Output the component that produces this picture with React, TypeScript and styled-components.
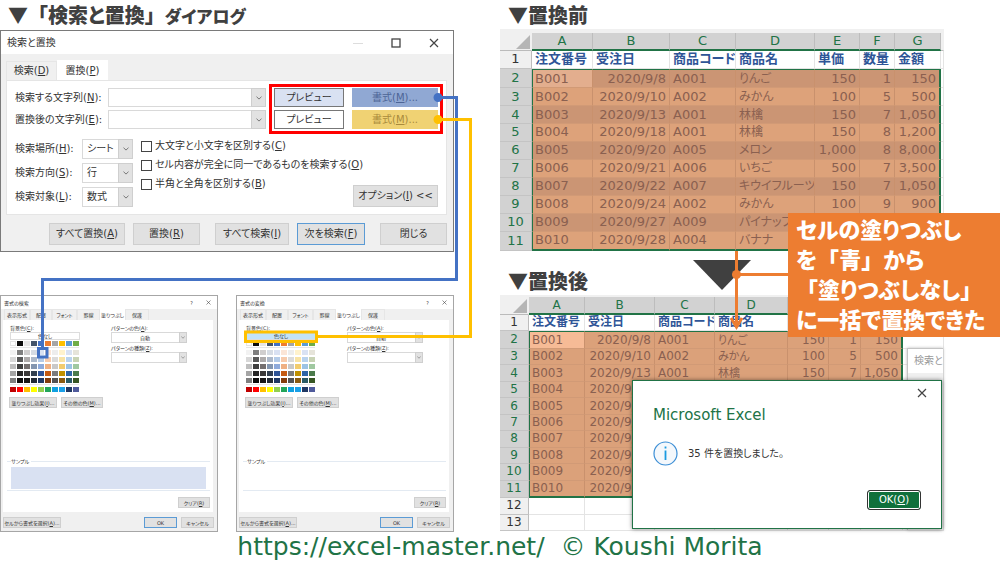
import React from "react";
import styled, { createGlobalStyle, css } from "styled-components";

const GlobalStyle = createGlobalStyle`
  *, *::before, *::after { box-sizing: border-box; }
  body {
    margin: 0;
    background: #fff;
    color: #333;
    font-family: "DejaVu Sans", "Noto Sans CJK JP", sans-serif;
    font-feature-settings: "palt";
  }
  button, input, select { font: inherit; color: inherit; font-feature-settings: inherit; margin: 0; }
`;

/* ---------- page ---------- */

const Page = styled.div`
  display: flex;
  flex-direction: column;
  overflow: hidden;
`;

const Columns = styled.main`
  display: grid;
  grid-template-columns: 1fr 1fr;
`;

const Column = styled.section`
  position: relative;
  min-width: 0;
`;

const Heading = styled.h2`
  margin: 0;
  padding-left: 8px;
  height: 29px;
  line-height: 29px;
  font-family: "Noto Sans CJK JP", sans-serif;
  font-size: 20px;
  font-weight: 900;
  color: #404040;
  white-space: nowrap;
`;

/* Corner brackets keep their full-width advance. */
const Bracket = styled.span`
  font-feature-settings: normal;
`;

const Katakana = styled.span`
  font-size: 17px;
`;

const Footer = styled.footer`
  text-align: center;
  font-size: 25px;
  line-height: 30px;
  color: #217346;
  white-space: pre;

  a { color: inherit; text-decoration: none; }
`;

/* ---------- shared dialog parts ---------- */

const Window = styled.div<{ $small?: boolean }>`
  display: flex;
  flex-direction: column;
  border: 1px solid ${(p) => (p.$small ? "#a6a6a6" : "#7a7a7a")};
  background: #f0f0f0;
  font-size: ${(p) => (p.$small ? 5 : 10)}px;
  line-height: ${(p) => (p.$small ? 8 : 14)}px;
  white-space: nowrap;
`;

const TitleBar = styled.div<{ $small?: boolean }>`
  display: flex;
  align-items: center;
  gap: ${(p) => (p.$small ? 13 : 28)}px;
  height: ${(p) => (p.$small ? 13 : 23)}px;
  padding: ${(p) => (p.$small ? "0 6px 0 3px" : "0 14px 0 6px")};
  background: #fff;

  span:first-child { margin-right: auto; }
`;

const Button = styled.button<{ $focus?: boolean; $wide: number; $tall: number; $fill?: string; $line?: string }>`
  width: ${(p) => p.$wide}px;
  height: ${(p) => p.$tall}px;
  flex: none;
  padding: 0;
  border: 1px solid ${(p) => (p.$focus ? "#5b9bd5" : p.$line || "#cfcfcf")};
  background: ${(p) => p.$fill || "#e1e1e1"};
  text-align: center;
  white-space: nowrap;
`;

const ComboFrame = styled.div<{ $wide: number; $tall: number }>`
  position: relative;
  width: ${(p) => p.$wide}px;
  height: ${(p) => p.$tall}px;

  input, select {
    appearance: none;
    display: block;
    width: 100%;
    height: 100%;
    padding: 0 4px;
    border: 1px solid #d9d9d9;
    border-radius: 0;
    background: #fff;
    outline: none;
  }
`;

const ComboArrow = styled.span<{ $small?: boolean }>`
  position: absolute;
  top: 0;
  right: 0;
  bottom: 0;
  width: ${(p) => (p.$small ? 8 : 15)}px;
  display: flex;
  align-items: center;
  justify-content: center;
  border: 1px solid #cfcfcf;
  background: #e2e2e2;
  pointer-events: none;
`;

function Chevron({ small }: { small?: boolean }) {
  return (
    <ComboArrow $small={small}>
      <svg width={small ? 4 : 6} height={small ? 3 : 4} viewBox="0 0 6 4">
        <path d="M.5 .7 3 3.1 5.5 .7" fill="none" stroke="#777" strokeWidth="1" />
      </svg>
    </ComboArrow>
  );
}

function Close({ size }: { size: number }) {
  return (
    <svg width={size} height={size} viewBox="0 0 10 10">
      <path d="M1 1 9 9M9 1 1 9" stroke="#444" strokeWidth="1.2" />
    </svg>
  );
}

/* Text with its access key, "(X)", underlined. */
function Keyed({ text }: { text: string }) {
  const m = text.match(/^(.*\()(\w)(\).*)$/);
  if (!m) return <>{text}</>;
  return (
    <span>
      {m[1]}
      <u>{m[2]}</u>
      {m[3]}
    </span>
  );
}

/* ---------- find and replace dialog ---------- */

const FindWindow = styled(Window)`
  max-width: 454px;
  margin-top: 1px;
`;

const FindBody = styled.div`
  padding: 6px 6px 6px 5px;
`;

const Tabs = styled.div`
  display: flex;
  align-items: flex-end;
`;

const Tab = styled.button<{ $active?: boolean; $wide: number; $tall: number }>`
  width: ${(p) => p.$wide}px;
  height: ${(p) => p.$tall}px;
  padding: 0;
  border: 1px solid ${(p) => (p.$active ? "#fff" : "#e6e6e6")};
  border-bottom: 0;
  background: ${(p) => (p.$active ? "#fff" : "#f0f0f0")};
`;

const FindPanel = styled.div`
  position: relative;
  height: 135px;
  padding: 7px 8px;
  border: 1px solid #e5e5e5;
  background: #fff;
`;

const TermRow = styled.div`
  display: grid;
  grid-template-columns: 93px 158px 78px 94px;
  align-items: center;
  margin-bottom: 3px;

  button { justify-self: end; }
`;

const FormatButton = styled(Button)<{ $ink: string }>`
  color: ${(p) => p.$ink};
`;

const RedFrame = styled.div`
  position: absolute;
  left: 262px;
  top: 3px;
  width: 174px;
  height: 50px;
  border: 3px solid #f00;
  pointer-events: none;
`;

const OptionArea = styled.div`
  display: flex;
  margin-top: 10px;
`;

const Scope = styled.div`
  display: grid;
  grid-template-columns: 67px 51px;
  row-gap: 4px;
  align-items: center;
`;

const Checks = styled.div`
  display: flex;
  flex-direction: column;
  gap: 5px;
  margin-left: 8px;
`;

const Check = styled.label`
  display: flex;
  align-items: center;
  gap: 3px;
  height: 14px;

  input {
    appearance: none;
    width: 11px;
    height: 11px;
    border: 1px solid #444;
    background: #fff;
  }
`;

const OptionSlot = styled.div`
  flex: 1;
  display: flex;
  justify-content: flex-end;
  align-items: flex-end;
  width: 0;
`;

const FindActions = styled.div`
  display: flex;
  justify-content: flex-end;
  gap: 8px;
  padding-top: 8px;

  button:nth-child(3), button:nth-child(5) { margin-left: 7px; }
`;

interface TermProps {
  id: string;
  label: string;
  fill: string;
  formatFill: string;
  formatColor: string;
}

function TermLine({ id, label, fill, formatFill, formatColor }: TermProps) {
  return (
    <TermRow>
      <label htmlFor={id}><Keyed text={label} /></label>
      <ComboFrame $wide={158} $tall={19}>
        <input id={id} type="text" />
        <Chevron />
      </ComboFrame>
      <Button $wide={70} $tall={19} $fill={fill} $line="#777">プレビュー</Button>
      <FormatButton $wide={86} $tall={19} $fill={formatFill} $line={formatFill} $ink={formatColor}>
        <Keyed text="書式(M)..." />
      </FormatButton>
    </TermRow>
  );
}

function FindReplaceDialog() {
  const scopes = [
    ["検索場所(H):", "シート"],
    ["検索方向(S):", "行"],
    ["検索対象(L):", "数式"],
  ];
  const checks = ["大文字と小文字を区別する(C)", "セル内容が完全に同一であるものを検索する(O)", "半角と全角を区別する(B)"];
  return (
    <FindWindow>
      <TitleBar>
        <span>検索と置換</span>
        <svg width="10" height="10"><path d="M0 5.5H10" stroke="#ddd" /></svg>
        <svg width="10" height="10"><rect x="1" y="1" width="8" height="8" fill="none" stroke="#444" strokeWidth="1.3" /></svg>
        <Close size={10} />
      </TitleBar>
      <FindBody>
        <Tabs>
          <Tab $wide={51} $tall={19}><Keyed text="検索(D)" /></Tab>
          <Tab $wide={51} $tall={20} $active><Keyed text="置換(P)" /></Tab>
        </Tabs>
        <FindPanel>
          <TermLine id="find" label="検索する文字列(N):" fill="#d9e1f2" formatFill="#90a8d3" formatColor="#4d6596" />
          <TermLine id="replace" label="置換後の文字列(E):" fill="#fff" formatFill="#f0d273" formatColor="#a98a3c" />
          <RedFrame />
          <OptionArea>
            <Scope>
              {scopes.map(([label, value], i) => (
                <React.Fragment key={label}>
                  <label htmlFor={`scope-${i}`}><Keyed text={label} /></label>
                  <ComboFrame $wide={51} $tall={20}>
                    <select id={`scope-${i}`}><option>{value}</option></select>
                    <Chevron />
                  </ComboFrame>
                </React.Fragment>
              ))}
            </Scope>
            <Checks>
              {checks.map((c) => (
                <Check key={c}><input type="checkbox" /><Keyed text={c} /></Check>
              ))}
            </Checks>
            <OptionSlot>
              <Button $wide={85} $tall={22}><Keyed text="オプション(I) <<" /></Button>
            </OptionSlot>
          </OptionArea>
        </FindPanel>
        <FindActions>
          <Button $wide={76} $tall={22}><Keyed text="すべて置換(A)" /></Button>
          <Button $wide={67} $tall={22}><Keyed text="置換(R)" /></Button>
          <Button $wide={74} $tall={22}><Keyed text="すべて検索(I)" /></Button>
          <Button $wide={68} $tall={22} $focus><Keyed text="次を検索(F)" /></Button>
          <Button $wide={67} $tall={22}>閉じる</Button>
        </FindActions>
      </FindBody>
    </FindWindow>
  );
}

/* ---------- format dialogs ---------- */

const FormatRow = styled.div`
  display: flex;
  gap: 18px;
  max-width: 454px;
  margin-top: 43px;
`;

const FormatWindow = styled(Window)`
  flex: 1;
  height: 237px;
  min-width: 0;
`;

const FormatTabs = styled(Tabs)`
  padding-left: 3px;
`;

const FormatPanel = styled.div`
  display: flex;
  flex-direction: column;
  flex: 1;
  margin: 0 4px 0 2px;
  padding: 4px 3px 4px 4px;
  background: #fff;
`;

const FillArea = styled.div`
  display: grid;
  grid-template-columns: 101px 1fr;
  padding-left: 3px;
`;

const FillColumn = styled.div`
  display: flex;
  flex-direction: column;
  align-items: flex-start;
`;

const PatternCombo = styled(ComboFrame)`
  margin-bottom: 1px;

  select { text-align: center; padding-right: 12px; }
`;

const PaletteBlock = styled.div<{ $ruled?: boolean }>`
  display: grid;
  grid-template-columns: repeat(10, 6px);
  column-gap: 1px;
  row-gap: 2px;
  padding-top: 1px;

  & + & { padding-top: 2px; border-top: 1px solid ${(p) => (p.$ruled ? "#e6e6e6" : "transparent")}; }
  & + & { margin-top: ${(p) => (p.$ruled ? 1 : 0)}px; }
`;

const Swatch = styled.span<{ $color: string }>`
  height: 5px;
  background: ${(p) => p.$color};
  ${(p) => p.$color === "#ffffff" && css`border: 1px solid #e4e4e4;`}
`;

const MoreColors = styled.div`
  display: flex;
  gap: 4px;
  padding: 5px 0 0 2px;
`;

const Sample = styled.fieldset`
  min-width: 0;
  height: 34px;
  margin: auto 0 6px;
  padding: 2px 4px;
  border: 0;
  border-top: 1px solid #e3eaf2;
  border-bottom: 1px solid #e3eaf2;

  legend { padding: 0 2px 0 0; }
`;

const SampleFill = styled.div<{ $color: string }>`
  height: 22px;
  background: ${(p) => p.$color};
`;

const ClearSlot = styled.div`
  display: flex;
  justify-content: flex-end;
`;

const FormatActions = styled.div`
  display: flex;
  gap: 4px;
  padding: 5px 3px 3px 2px;

  button:first-child { margin-right: auto; }
`;

const themeColors = [
  ["#ffffff", "#0d0d0d", "#e7e6e6", "#44546a", "#4472c4", "#ed7d31", "#a5a5a5", "#ffc000", "#5b9bd5", "#70ad47"],
];
const shades = [
  ["#f2f2f2", "#7f7f7f", "#d0cece", "#d6dce4", "#d9e1f2", "#fbe5d6", "#ededed", "#fff2cc", "#d9e2f3", "#e6e4da"],
  ["#d8d8d8", "#595959", "#aeabab", "#adb9ca", "#b4cbe8", "#f7cbac", "#dbdbdb", "#f8e3a4", "#b9d3ee", "#c8d3b4"],
  ["#bfbfbf", "#3f3f3f", "#757070", "#8496b0", "#8eaadb", "#efb083", "#c9c9c9", "#f2cc6e", "#9cc3e5", "#a0c8a0"],
  ["#a5a5a5", "#262626", "#3a3838", "#323f4f", "#2f5496", "#c55a11", "#7b7b7b", "#bf9000", "#2e65a5", "#4b7b4b"],
  ["#7f7f7f", "#0c0c0c", "#171616", "#222a35", "#1f3864", "#833c0b", "#525252", "#8a5a10", "#2a5a64", "#375623"],
];
const vivid = [["#c00000", "#ff0000", "#ffc000", "#ffff00", "#92d050", "#22a55a", "#10a0e0", "#1aa0e8", "#203864", "#4f5a9b"]];

function Palette({ rows, ruled }: { rows: string[][]; ruled?: boolean }) {
  return (
    <PaletteBlock $ruled={ruled}>
      {rows.flat().map((c, i) => <Swatch key={i} $color={c} />)}
    </PaletteBlock>
  );
}

const NoFillLabel = styled.span`
  display: block;
  line-height: 6px;
`;

const formatTabs: [string, number][] = [["表示形式", 26], ["配置", 22], ["フォント", 25], ["罫線", 23], ["塗りつぶし", 25], ["保護", 24]];

function FormatDialog({ id, title, noFill, sample }: { id: string; title: string; noFill: string; sample: string }) {
  return (
    <FormatWindow $small>
      <TitleBar $small>
        <span>{title}</span>
        <span>?</span>
        <Close size={5} />
      </TitleBar>
      <FormatTabs>
        {formatTabs.map(([name, w]) => (
          <Tab key={name} $wide={w} $tall={11} $active={name === "塗りつぶし"}>{name}</Tab>
        ))}
      </FormatTabs>
      <FormatPanel>
        <FillArea>
          <FillColumn>
            <Keyed text="背景色(C):" />
            <Button $wide={70} $tall={8} $fill={noFill} $line="#ddd"><NoFillLabel>色なし</NoFillLabel></Button>
            <Palette rows={themeColors} />
            <Palette rows={shades} ruled />
            <Palette rows={vivid} />
          </FillColumn>
          <FillColumn>
            <label htmlFor={`${id}-color`}><Keyed text="パターンの色(A):" /></label>
            <PatternCombo $wide={76} $tall={11}>
              <select id={`${id}-color`}><option>自動</option></select>
              <Chevron small />
            </PatternCombo>
            <label htmlFor={`${id}-kind`}><Keyed text="パターンの種類(Z):" /></label>
            <PatternCombo $wide={76} $tall={11}>
              <select id={`${id}-kind`}><option></option></select>
              <Chevron small />
            </PatternCombo>
          </FillColumn>
        </FillArea>
        <MoreColors>
          <Button $wide={48} $tall={11}><Keyed text="塗りつぶし効果(I)..." /></Button>
          <Button $wide={42} $tall={11}><Keyed text="その他の色(M)..." /></Button>
        </MoreColors>
        <Sample>
          <legend>サンプル</legend>
          <SampleFill $color={sample} />
        </Sample>
        <ClearSlot>
          <Button $wide={32} $tall={11}><Keyed text="クリア(R)" /></Button>
        </ClearSlot>
      </FormatPanel>
      <FormatActions>
        <Button $wide={58} $tall={11}><Keyed text="セルから書式を選択(A)..." /></Button>
        <Button $wide={33} $tall={11} $focus>OK</Button>
        <Button $wide={33} $tall={11}>キャンセル</Button>
      </FormatActions>
    </FormatWindow>
  );
}

const Overlay = styled.svg`
  position: absolute;
  left: 0;
  top: 0;
  overflow: visible;
  pointer-events: none;
`;

function Connectors() {
  return (
    <Overlay width="480" height="370" viewBox="0 0 480 370" fill="none" strokeWidth="3">
      <path d="M438 97.5H456.5V279.5H42.5V347" stroke="#4472c4" />
      <rect x="38.5" y="348.5" width="8.5" height="8.5" stroke="#4472c4" />
      <circle cx="438" cy="97.5" r="3" fill="#4472c4" stroke="#4472c4" />
      <path d="M438 119.5H470.5V336.5H318" stroke="#ffc000" />
      <rect x="245.5" y="332" width="71" height="9.5" stroke="#ffc000" />
      <circle cx="438" cy="119.5" r="3" fill="#ffc000" stroke="#ffc000" />
    </Overlay>
  );
}

/* ---------- worksheets ---------- */

const Sheet = styled.table<{ $size: number; $tall: number; $line: number; $strip: number }>`
  width: 444px;
  height: ${(p) => p.$tall}px;
  border-collapse: separate;
  border-spacing: 0;
  table-layout: fixed;
  background: #fff;
  border-top: ${(p) => p.$strip}px solid #f0f0f0;
  font-size: ${(p) => p.$size}px;
  line-height: ${(p) => p.$line}px;
  white-space: nowrap;

  th, td { padding: 0 3px; overflow: hidden; border-right: 1px solid #e4e4e4; border-bottom: 1px solid #e4e4e4; }
`;

const Letter = styled.th<{ $idle?: boolean }>`
  height: 18px;
  && {
    padding: 0;
    border-right-color: ${(p) => (p.$idle ? "#f0f0f0" : "#bdbdbd")};
    border-bottom: ${(p) => (p.$idle ? "1px solid #bbb" : "2px solid #217346")};
  }
  background: ${(p) => (p.$idle ? "#f0f0f0" : "#d2d2d2")};
  color: #217346;
  font-weight: 400;
`;

const RowNumber = styled.th<{ $idle?: boolean }>`
  && {
    padding: 0;
    border-right-color: #bdbdbd;
    border-bottom-color: #c4c4c4;
  }
  background: ${(p) => (p.$idle ? "#f0f0f0" : "#d2d2d2")};
  color: ${(p) => (p.$idle ? "#333" : "#217346")};
  font-weight: 400;
`;

const FieldName = styled.td`
  && { padding-right: 0; }
  color: #2f5597;
  font-weight: 700;
`;

const Cell = styled.td<{ $fill: string; $right?: boolean; $edge: string; $size: number }>`
  background: ${(p) => p.$fill};
  color: #8a6050;
  font-size: ${(p) => p.$size}px;
  text-align: ${(p) => (p.$right ? "right" : "left")};
  && {
    ${(p) => !p.$right && "padding-right: 0;"}
    border-right-color: #c9916d;
    border-bottom-color: #d19a76;
    ${(p) => p.$edge.includes("t") && "border-top: 1px solid #217346;"}
    ${(p) => p.$edge.includes("l") && "border-left: 1px solid #217346; padding-left: 2px;"}
    ${(p) => p.$edge.includes("r") && "border-right: 2px solid #217346;"}
    ${(p) => p.$edge.includes("b") && "border-bottom: 2px solid #217346;"}
  }
`;

const Corner = styled.svg`
  display: block;
  width: 14px;
  height: 14px;
  margin: 1px 1px 0 auto;
`;

const fields = ["注文番号", "受注日", "商品コード", "商品名", "単価", "数量", "金額"];
const orders = [
  ["B001", "2020/9/8", "A001", "りんご", "150", "1", "150"],
  ["B002", "2020/9/10", "A002", "みかん", "100", "5", "500"],
  ["B003", "2020/9/13", "A001", "林檎", "150", "7", "1,050"],
  ["B004", "2020/9/18", "A001", "林檎", "150", "8", "1,200"],
  ["B005", "2020/9/20", "A005", "メロン", "1,000", "8", "8,000"],
  ["B006", "2020/9/21", "A006", "いちご", "500", "7", "3,500"],
  ["B007", "2020/9/22", "A007", "キウイフルーツ", "150", "7", "1,050"],
  ["B008", "2020/9/24", "A002", "みかん", "100", "9", "900"],
  ["B009", "2020/9/27", "A009", "パイナップル", "", "", ""],
  ["B010", "2020/9/28", "A004", "バナナ", "", "", ""],
];

interface SheetProps {
  size: number;
  tall: number;
  line: number;
  strip: number;
  widths: number[];
  fills: [string, string];
  active: string;
  blanks: number[];
  covered?: number;
}

/* Rows from `covered` on lie under the message box from their third column. */
function Worksheet({ size, tall, line, strip, widths, fills, active, blanks, covered = 99 }: SheetProps) {
  return (
    <Sheet $size={size} $tall={tall} $line={line} $strip={strip}>
      <colgroup>{widths.map((w, i) => <col key={i} width={w} />)}<col /></colgroup>
      <thead>
        <tr>
          <Letter $idle>
            <Corner viewBox="0 0 14 14"><path d="M14 0V14H0Z" fill="#b5b5b5" /></Corner>
          </Letter>
          {"ABCDEFG".split("").map((l) => <Letter key={l}>{l}</Letter>)}
          <Letter $idle />
        </tr>
      </thead>
      <tbody>
        <tr>
          <RowNumber $idle>1</RowNumber>
          {fields.map((f) => <FieldName key={f}>{f}</FieldName>)}
          <td />
        </tr>
        {orders.map((row, r) => (
          <tr key={row[0]}>
            <RowNumber>{r + 2}</RowNumber>
            {row.map((v, c) => (
              <Cell
                key={c}
                $fill={r === 0 && c === 0 ? active : fills[r % 2]}
                $right={c === 1 || c > 3}
                $size={c === 3 ? size - 1 : size}
                $edge={`${r === 0 ? "t" : ""}${c === 0 ? "l" : ""}${c === 6 ? "r" : ""}${r === 9 ? "b" : ""}`}
              >
                {r >= covered && c > 1 ? "" : v}
              </Cell>
            ))}
            <td />
          </tr>
        ))}
        {blanks.map((n) => (
          <tr key={n}>
            <RowNumber $idle>{n}</RowNumber>
            {widths.map((_, i) => <td key={i} />)}
          </tr>
        ))}
      </tbody>
    </Sheet>
  );
}

const AfterBlock = styled.div`
  padding-top: 15px;
`;

/* ---------- notes over the worksheets ---------- */

const Callout = styled.p`
  position: absolute;
  left: 288px;
  right: 0;
  top: 213px;
  margin: 0;
  padding: 0 0 4px 8px;
  background: #ed7d31;
  color: #fff;
  font-family: "Noto Sans CJK JP", sans-serif;
  font-size: 22px;
  font-weight: 900;
  line-height: 30px;
  white-space: nowrap;
`;

const BackWindow = styled.div`
  position: absolute;
  left: 407px;
  top: 348px;
  width: 36px;
  height: 182px;
  padding: 4px 0 0 6px;
  overflow: hidden;
  border: 1px solid #c4c4c4;
  border-width: 1px 0 0 1px;
  background: linear-gradient(#fff 24px, #f0f0f0 24px);
  box-shadow: 0 0 3px #bbb;
  color: #999;
  font-size: 10px;
  line-height: 16px;
  white-space: nowrap;
`;

const MessageBox = styled.div`
  position: absolute;
  left: 132px;
  top: 380px;
  width: 310px;
  height: 149px;
  display: flex;
  flex-direction: column;
  padding: 22px 20px 18px;
  border: 1px solid #217346;
  box-shadow: 0 0 4px rgba(0, 0, 0, 0.5);
  background: #fff;

  h3 {
    margin: 0;
    font-size: 15px;
    line-height: 24px;
    font-weight: 400;
    color: #217346;
  }
`;

const MessageClose = styled.button`
  position: absolute;
  right: 14px;
  top: 7px;
  width: 10px;
  height: 10px;
  padding: 0;
  border: 0;
  background: none;
  display: flex;
`;

const MessageLine = styled.div`
  display: flex;
  align-items: center;
  gap: 10px;
  padding-top: 14px;
  font-size: 10px;
  line-height: 16px;
`;

const OkButton = styled.button`
  align-self: flex-end;
  width: 54px;
  height: 20px;
  margin-top: auto;
  padding: 0;
  border: 1px solid #333;
  border-radius: 3px;
  background: #0f703b;
  box-shadow: inset 0 0 0 1px #fff;
  color: #fff;
  font-size: 10px;
  line-height: 16px;
`;

function FlowArrows() {
  return (
    <Overlay width="300" height="340" viewBox="0 0 300 340">
      <path d="M193 260H251L222 290Z" fill="#404040" />
      <path d="M236.5 251V327M236.5 274.5H288M231 318 236.5 327 242 318" fill="none" stroke="#ed7d31" strokeWidth="3" />
      <circle cx="236.5" cy="274.5" r="4.5" fill="#ed7d31" />
    </Overlay>
  );
}

export default function App() {
  return (
    <Page>
      <GlobalStyle />
      <Columns>
        <Column>
          <Heading>▼<Bracket>「</Bracket>検索と置換<Bracket>」</Bracket><Katakana>ダイアログ</Katakana></Heading>
          <FindReplaceDialog />
          <FormatRow>
            <FormatDialog id="find-format" title="書式の検索" noFill="#fff" sample="#d9e1f2" />
            <FormatDialog id="replace-format" title="書式の変換" noFill="#c3e3f8" sample="#fff" />
          </FormatRow>
          <Connectors />
        </Column>
        <Column>
          <Heading>▼置換前</Heading>
          <Worksheet
            size={13} tall={222} line={16} strip={4}
            widths={[32, 61, 77, 66, 79, 45, 35, 46]}
            fills={["#cb9574", "#dda27a"]} active="#e3ae8e" blanks={[]}
          />
          <AfterBlock>
            <Heading>▼置換後</Heading>
            <Worksheet
              size={12} tall={236} line={15} strip={2}
              widths={[29, 56, 70, 60, 73, 41, 32, 42]}
              fills={["#dba17a", "#dba17a"]} active="#f6bb96" blanks={[12, 13]} covered={3}
            />
          </AfterBlock>
          <BackWindow>検索と置換</BackWindow>
          <FlowArrows />
          <Callout>
            セルの塗りつぶし<br />
            を<Bracket>「</Bracket>青<Bracket>」</Bracket>から<br />
            <Bracket>「</Bracket>塗りつぶしなし<Bracket>」</Bracket><br />
            に一括で置換できた
          </Callout>
          <MessageBox>
            <MessageClose aria-label="閉じる"><Close size={10} /></MessageClose>
            <h3>Microsoft Excel</h3>
            <MessageLine>
              <svg width="25" height="25" viewBox="0 0 25 25">
                <circle cx="12.5" cy="12.5" r="11.5" fill="#f4f8fc" stroke="#3d8fd6" strokeWidth="1.2" />
                <path d="M12.5 9.5V19M12.5 5.5V7.5" stroke="#1a9ae0" strokeWidth="1.8" />
              </svg>
              35 件を置換しました。
            </MessageLine>
            <OkButton><Keyed text="OK(O)" /></OkButton>
          </MessageBox>
        </Column>
      </Columns>
      <Footer><a href="https://excel-master.net/">https://excel-master.net/</a>  © Koushi Morita</Footer>
    </Page>
  );
}
